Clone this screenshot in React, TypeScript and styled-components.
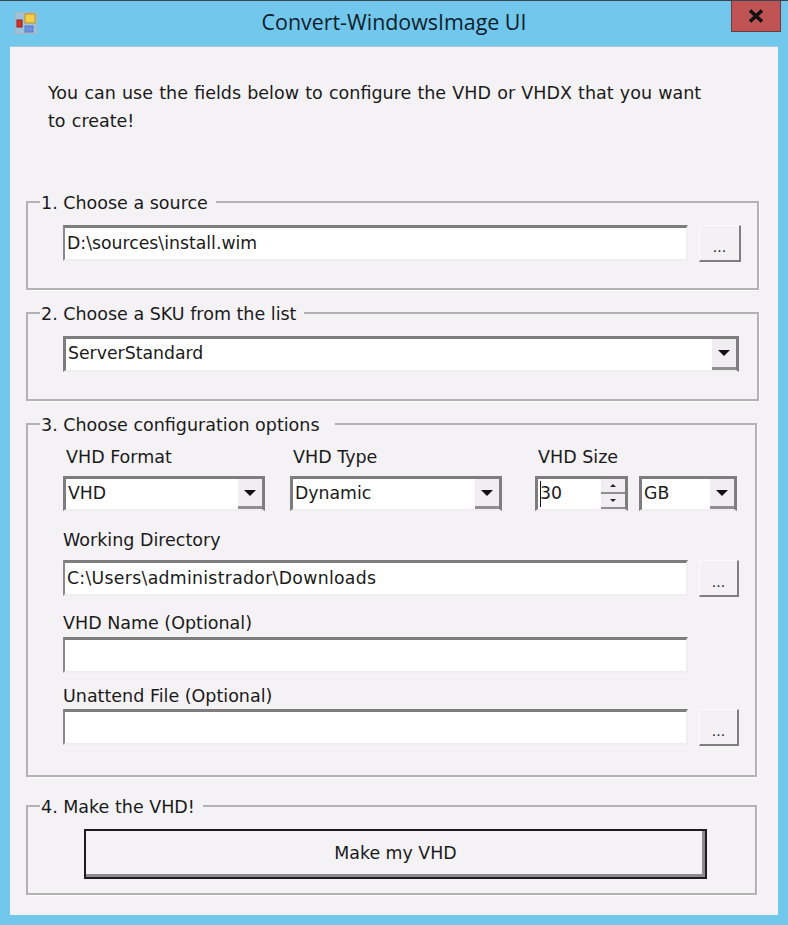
import React from "react";
import styled, { createGlobalStyle } from "styled-components";

const GlobalStyle = createGlobalStyle`
  html, body {
    margin: 0;
    padding: 0;
    background: #72c7ec;
  }
  body {
    font-family: "DejaVu Sans", "Liberation Sans", sans-serif;
    color: #1a1a1a;
  }
`;

const Win = styled.div`
  width: 788px;
  height: 925px;
  box-sizing: border-box;
  background: #72c7ec;
  border-top: 1px solid #3c4650;
  display: flex;
  flex-direction: column;
`;

const TitleBar = styled.div`
  height: 45px;
  flex: none;
  position: relative;
  display: flex;
  align-items: center;
  justify-content: center;
  font-family: "Open Sans", sans-serif;
  font-size: 21.4px;
  color: #10202a;
  padding-bottom: 4px;
  box-sizing: border-box;
`;

const AppIcon = styled.svg`
  position: absolute;
  left: 15px;
  top: 11px;
`;

const CloseBtn = styled.div`
  position: absolute;
  right: 7px;
  top: 0;
  width: 50px;
  height: 31px;
  box-sizing: border-box;
  background: #c05454;
  border: 1px solid #6e3a3e;
  border-top: none;
  display: flex;
  align-items: center;
  justify-content: center;
`;

const Client = styled.div`
  width: 768px;
  height: 869px;
  margin-left: 10px;
  box-sizing: border-box;
  background: #f5f2f6;
  border-top: 1px solid #a9c8d8;
  padding: 0 19px 0 16px;
  display: flex;
  flex-direction: column;
`;

const Intro = styled.p`
  margin: 32px 0 0 22px;
  width: 665px;
  height: 112px;
  font-size: 17.5px;
  line-height: 28px;
  word-spacing: 0.65px;
`;

const Group = styled.fieldset<{ $h: number; $w?: number; $mt: number }>`
  margin: ${(p) => p.$mt}px 0 0;
  width: ${(p) => p.$w ?? 733}px;
  height: ${(p) => p.$h}px;
  box-sizing: border-box;
  padding: 0;
  border: 2px solid #b2b2b2;
  border-radius: 0;
  min-width: 0;
  box-shadow: 1px 1px 0 #fbfbfb;
`;

const Legend = styled.legend<{ $pr?: number }>`
  margin-left: 12px;
  padding: 1px ${(p) => p.$pr ?? 8}px 0 1px;
  box-sizing: border-box;
  font-size: 17.5px;
  line-height: 22px;
  height: 22px;
  white-space: nowrap;
`;

const GroupBody = styled.div<{ $pt: number }>`
  padding: ${(p) => p.$pt}px 0 0 35px;
`;

const Row = styled.div<{ $mt?: number }>`
  display: flex;
  margin-top: ${(p) => p.$mt ?? 0}px;
`;

const Field = styled.div<{ $w: number; $h?: number; $mt?: number; $ls?: number }>`
  width: ${(p) => p.$w}px;
  height: ${(p) => p.$h ?? 36}px;
  margin-top: ${(p) => p.$mt ?? 0}px;
  flex: none;
  box-sizing: border-box;
  background: #fff;
  border-style: solid;
  border-width: 3px 2px 2px 2px;
  border-color: #7d7d7d #f0eef0 #f0eef0 #8a8a8a;
  font-size: 17.3px;
  letter-spacing: ${(p) => p.$ls ?? 0}px;
  line-height: 31px;
  padding-left: 2px;
  white-space: nowrap;
  display: flex;
`;

const Combo = styled(Field)`
  border-color: #7d7d7d #7d7d7d #f0eef0 #7d7d7d;
  border-width: 3px 3px 2px 3px;
  justify-content: space-between;
  padding-right: 0;
  line-height: 29px;
`;

const ComboBtn = styled.span`
  width: 24px;
  flex: none;
  background: #f1eef2;
  border-bottom: 3px solid #8f8f8f;
  display: flex;
  align-items: center;
  justify-content: center;
  box-sizing: border-box;
`;

const Arrow = styled.span`
  width: 0;
  height: 0;
  border-left: 6px solid transparent;
  border-right: 6px solid transparent;
  border-top: 6px solid #111;
`;

const SpinCol = styled.span`
  width: 24px;
  flex: none;
  display: flex;
  flex-direction: column;
`;

const SpinBtn = styled.span<{ $down?: boolean }>`
  flex: 1;
  background: #f1eef2;
  border-bottom: 2px solid #8f8f8f;
  display: flex;
  align-items: center;
  justify-content: center;
  &::before {
    content: "";
    border-left: 3px solid transparent;
    border-right: 3px solid transparent;
    ${(p) => (p.$down ? "border-top: 3px solid #222;" : "border-bottom: 3px solid #222;")}
  }
`;

const Caret = styled.span`
  width: 1px;
  height: 26px;
  margin: 2px -1px 0 0;
  background: #111;
  flex: none;
`;

const SpinValue = styled.span`
  flex: 1;
`;

const Dots = styled.button<{ $w?: number; $h?: number }>`
  width: ${(p) => p.$w ?? 42}px;
  height: ${(p) => p.$h ?? 37}px;
  flex: none;
  margin-left: 11px;
  padding: 8px 0 0;
  box-sizing: border-box;
  background: #f4f1f5;
  border-style: solid;
  border-width: 1px 2px 2px 1px;
  border-color: #fbfbfb #7f7f7f #7f7f7f #fbfbfb;
  border-radius: 0;
  font-family: inherit;
  font-size: 14px;
  color: #222;
`;

const Cols = styled.div<{ $mt?: number }>`
  display: grid;
  grid-template-columns: 227px 245px 104px 98px;
  margin-top: ${(p) => p.$mt ?? 0}px;
`;

const Label = styled.div<{ $ml?: number; $mt?: number }>`
  font-size: 17.5px;
  line-height: 22px;
  margin-left: ${(p) => p.$ml ?? 0}px;
  margin-top: ${(p) => p.$mt ?? 0}px;
  white-space: nowrap;
`;

const MakeBtn = styled.button`
  display: block;
  width: 623px;
  height: 50px;
  margin-left: 21px;
  padding: 0 0 3px;
  box-sizing: border-box;
  background: #f5f2f6;
  border: 2px solid #1d1d1d;
  border-radius: 0;
  box-shadow: inset -3px -3px 0 #8c8c8c;
  font-family: inherit;
  font-size: 17.4px;
  color: #1a1a1a;
`;

const App: React.FC = () => (
  <>
    <GlobalStyle />
    <Win>
      <TitleBar>
        <AppIcon width="22" height="22" viewBox="0 0 22 22">
          <rect x="0.5" y="0.5" width="21" height="21" fill="#9cc3da" stroke="#b4b4b4" />
          <rect x="10" y="2" width="10" height="9" fill="#f4cf45" stroke="#b98f2a" />
          <rect x="2" y="8" width="5" height="7" fill="#d6302c" stroke="#8e1f1d" />
          <rect x="10" y="14" width="8" height="6" fill="#6f8fe0" stroke="#5a76c4" />
        </AppIcon>
        Convert-WindowsImage UI
        <CloseBtn>
          <svg width="16" height="14" viewBox="0 0 16 14">
            <path d="M2 1.5 L14 12.5 M14 1.5 L2 12.5" stroke="#111" strokeWidth="3.6" />
          </svg>
        </CloseBtn>
      </TitleBar>
      <Client>
        <Intro>You can use the fields below to configure the VHD or VHDX that you want to create!</Intro>

        <Group $h={99} $mt={0}>
          <Legend>1. Choose a source</Legend>
          <GroupBody $pt={12}>
            <Row>
              <Field $w={625}>D:\sources\install.wim</Field>
              <Dots>...</Dots>
            </Row>
          </GroupBody>
        </Group>

        <Group $h={99} $mt={12}>
          <Legend>2. Choose a SKU from the list</Legend>
          <GroupBody $pt={12}>
            <Combo $w={676}>
              ServerStandard
              <ComboBtn><Arrow /></ComboBtn>
            </Combo>
          </GroupBody>
        </Group>

        <Group $h={364} $w={731} $mt={12}>
          <Legend $pr={15}>3. Choose configuration options</Legend>
          <GroupBody $pt={11}>
            <Cols>
              <Label $ml={3}>VHD Format</Label>
              <Label $ml={3}>VHD Type</Label>
              <Label $ml={3}>VHD Size</Label>
              <span />
            </Cols>
            <Cols $mt={8}>
              <Combo $w={202} $h={35}>
                VHD
                <ComboBtn><Arrow /></ComboBtn>
              </Combo>
              <Combo $w={212} $h={35}>
                Dynamic
                <ComboBtn><Arrow /></ComboBtn>
              </Combo>
              <Combo $w={93} $h={35}>
                <Caret />
                <SpinValue>30</SpinValue>
                <SpinCol>
                  <SpinBtn />
                  <SpinBtn $down />
                </SpinCol>
              </Combo>
              <Combo $w={98} $h={35}>
                GB
                <ComboBtn><Arrow /></ComboBtn>
              </Combo>
            </Cols>
            <Label $mt={18}>Working Directory</Label>
            <Row $mt={9}>
              <Field $w={625} $ls={0.3}>C:\Users\administrador\Downloads</Field>
              <Dots $w={40}>...</Dots>
            </Row>
            <Label $mt={15}>VHD Name (Optional)</Label>
            <Field $w={625} $mt={3} />
            <Label $mt={12}>Unattend File (Optional)</Label>
            <Row $mt={2}>
              <Field $w={625} />
              <Dots $w={40}>...</Dots>
            </Row>
          </GroupBody>
        </Group>

        <Group $h={100} $w={731} $mt={18}>
          <Legend>4. Make the VHD!</Legend>
          <GroupBody $pt={12}>
            <MakeBtn>Make my VHD</MakeBtn>
          </GroupBody>
        </Group>
      </Client>
    </Win>
  </>
);

export default App;
